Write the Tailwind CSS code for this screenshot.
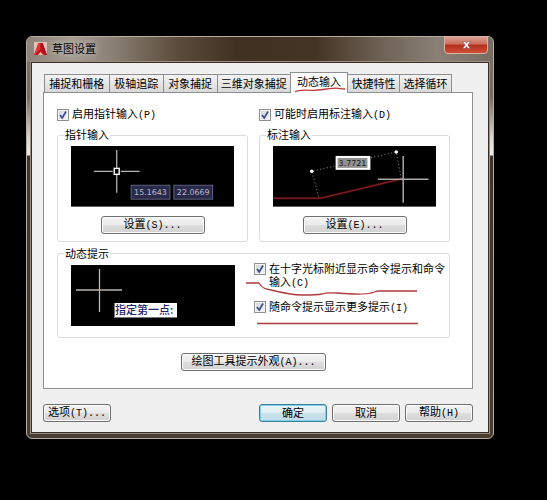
<!DOCTYPE html>
<html lang="zh-CN">
<head>
<meta charset="utf-8">
<meta name="viewport" content="width=device-width, initial-scale=1">
<title>草图设置</title>
<script src="https://cdn.jsdelivr.net/npm/@tailwindcss/browser@4"></script>
</head>
<body class="min-h-screen bg-black pt-9 pl-[26px] pr-[53px] text-[11px] leading-[12px] text-black font-['Liberation_Sans','Noto_Sans_CJK_SC',sans-serif]">
<main class="rounded-md border border-[#b9ad9f] bg-[linear-gradient(180deg,#7c7166_0,#756b61_60px,#d8d5d0_100px,#eeeeec_118px,#40352b_119px,#4a3d32_100%)] px-1 pb-[5px]">
  <header class="-mx-1 flex h-[25px] items-start justify-between rounded-t-md bg-[linear-gradient(90deg,#8d857b_0,#a39b91_10%,#857a6e_20%,#5c4c3c_32%,#413122_45%,#443424_62%,#6e6256_76%,#8a8075_88%,#776c62_100%)] pl-[7px] pr-[5px]">
    <div class="flex items-center gap-[5px] pt-[5px]">
      <svg class="size-[13px]" viewBox="0 0 13 13" aria-hidden="true"><rect width="13" height="13" fill="#e3bdb8"/><path d="M0 13 4.500 1h4l4.500 12H9.500L6.500 10 4 13z" fill="#c4161c"/><path d="M4.500 1h2L5.500 8 0 13z" fill="#dd3a37"/><path d="M6.500 1h2L13 13 8 9z" fill="#a5141a"/></svg>
      <h1 class="[text-shadow:0_0_6px_#ffffffaa]">草图设置</h1>
    </div>
    <button type="button" aria-label="关闭" class="-mt-px flex h-[18px] w-11 items-center justify-center rounded-b border border-[#d9b3a8] bg-[linear-gradient(180deg,#dca093_0,#cc6a58_45%,#b32d1b_50%,#cf4f37_100%)]">
      <svg class="h-2 w-[9px]" viewBox="0 0 9 8" aria-hidden="true"><path d="M.5.5h2.600L4.500 2.300 5.900.5h2.600L5.800 4l2.700 3.500H5.900L4.500 5.700 3.100 7.500H.5L3.200 4z" fill="#fff" stroke="#6b4540" stroke-width=".5"/></svg>
    </button>
  </header>
  <div class="border border-[#3a2e24] bg-[#f0f0f0] pt-[9px] pr-[15px] pb-[10px] pl-[11px] outline outline-[#9a8f82]">
    <div role="tablist" class="relative mr-[21px] ml-px flex items-end">
      <button role="tab" type="button" class="h-[18px] flex-[65] whitespace-nowrap border border-b-0 border-[#8c8e90] bg-linear-to-b from-[#f4f4f4] to-[#d8d8d8]">捕捉和栅格</button>
      <button role="tab" type="button" class="h-[18px] flex-[54] whitespace-nowrap border border-b-0 border-l-0 border-[#8c8e90] bg-linear-to-b from-[#f4f4f4] to-[#d8d8d8]">极轴追踪</button>
      <button role="tab" type="button" class="h-[18px] flex-[54] whitespace-nowrap border border-b-0 border-l-0 border-[#8c8e90] bg-linear-to-b from-[#f4f4f4] to-[#d8d8d8]">对象捕捉</button>
      <button role="tab" type="button" class="h-[18px] flex-[74] whitespace-nowrap border-t border-[#8c8e90] bg-linear-to-b from-[#f4f4f4] to-[#d8d8d8]">三维对象捕捉</button>
      <button role="tab" type="button" aria-selected="true" class="relative -mb-px h-[21px] flex-[57] whitespace-nowrap border border-b-0 border-[#8c8e90] bg-white pb-[3px]">动态输入
        <svg class="absolute top-[14px] left-1 h-[6px] w-[50px]" viewBox="0 0 50 6" aria-hidden="true"><path d="M0 5C4 2 10 3.500 18 3.300S30 2 38 1.300 44 2.200 50 2" fill="none" stroke="#c0393b" stroke-width="1.300"/></svg>
      </button>
      <button role="tab" type="button" class="h-[18px] flex-[52] whitespace-nowrap border border-b-0 border-l-0 border-[#8c8e90] bg-linear-to-b from-[#f4f4f4] to-[#d8d8d8]">快捷特性</button>
      <button role="tab" type="button" class="h-[18px] flex-[52] whitespace-nowrap border border-b-0 border-l-0 border-[#8c8e90] bg-linear-to-b from-[#f4f4f4] to-[#d8d8d8]">选择循环</button>
    </div>
    <section role="tabpanel" class="border border-[#8c8e90] bg-white pt-[15px] pr-[22px] pb-[17px] pl-[13px]">
      <div class="grid grid-cols-2 gap-x-[11px] gap-y-[7px]">
        <label class="flex h-[14px] items-center gap-[3px]">
          <span class="relative size-3"><input type="checkbox" checked class="peer block size-3 appearance-none border border-[#8e8f8f] bg-linear-to-br from-[#cfd4da] to-[#f4f5f6] shadow-[inset_0_0_0_1px_#f4f4f4]"><svg class="pointer-events-none absolute inset-0 hidden size-3 peer-checked:block" viewBox="0 0 12 12" aria-hidden="true"><path d="M3 6l2.200 3L9 2.500" fill="none" stroke="#3c4f86" stroke-width="1.700"/></svg></span>
          <span>启用指针输入<span class="font-['Liberation_Mono',monospace] text-[10px]">(P)</span></span>
        </label>
        <label class="flex h-[14px] items-center gap-[3px]">
          <span class="relative size-3"><input type="checkbox" checked class="peer block size-3 appearance-none border border-[#8e8f8f] bg-linear-to-br from-[#cfd4da] to-[#f4f5f6] shadow-[inset_0_0_0_1px_#f4f4f4]"><svg class="pointer-events-none absolute inset-0 hidden size-3 peer-checked:block" viewBox="0 0 12 12" aria-hidden="true"><path d="M3 6l2.200 3L9 2.500" fill="none" stroke="#3c4f86" stroke-width="1.700"/></svg></span>
          <span>可能时启用标注输入<span class="font-['Liberation_Mono',monospace] text-[10px]">(D)</span></span>
        </label>
        <fieldset class="min-w-0 rounded-[3px] border border-[#dcdcdc] px-[13px] pb-[7px]">
          <legend class="-ml-[7px] px-px">指针输入</legend>
          <div class="flex flex-col items-center gap-[9px] pt-[5px]">
            <svg class="w-full" viewBox="0 0 164 61" role="img" aria-label="指针输入预览">
              <rect width="164" height="61" fill="#000"/>
              <path d="M46 4v18M46 29v18M23 25.500h19M50 25.500h19" stroke="#b5b5b0" stroke-width="1.300"/>
              <rect x="43.500" y="22.500" width="5" height="6" fill="none" stroke="#fff" stroke-width="1.400"/>
              <g fill="#292a49" stroke="#5d5f7e"><rect x="60.500" y="39.500" width="39" height="14"/><rect x="103.500" y="39.500" width="39" height="14"/></g>
              <g fill="#b9bad0" font-family="DejaVu Sans" font-size="8" text-anchor="middle"><text x="80" y="49">15.1643</text><text x="123" y="49">22.0669</text></g>
            </svg>
            <button type="button" class="h-[18px] w-[104px] rounded-[3px] border border-[#707070] bg-[linear-gradient(180deg,#f3f3f3_0,#ebebeb_48%,#dddddd_52%,#d2d2d2_100%)] shadow-[inset_0_0_0_1px_#fafafa]">设置<span class="font-['Liberation_Mono',monospace] text-[10px]">(S)...</span></button>
          </div>
        </fieldset>
        <fieldset class="min-w-0 rounded-[3px] border border-[#dcdcdc] px-[13px] pb-[7px]">
          <legend class="-ml-[7px] px-px">标注输入</legend>
          <div class="flex flex-col items-center gap-[9px] pt-[5px]">
            <svg class="w-full" viewBox="0 0 164 61" role="img" aria-label="标注输入预览">
              <rect width="164" height="61" fill="#000"/>
              <path d="M0 52.500h48L130 33" fill="none" stroke="#3c0609" stroke-width="2.500"/>
              <path d="M0 52.500h48L130 33" fill="none" stroke="#96292f" stroke-width=".9"/>
              <path d="M46 51 39 25.500 124 6l5 27" fill="none" stroke="#a3a3a3" stroke-width=".9" stroke-dasharray="1 2.500"/>
              <circle cx="39" cy="25.500" r="1.800" fill="#fff"/><circle cx="124" cy="6" r="1.800" fill="#fff"/>
              <rect x="63" y="10" width="35" height="14" fill="#fff"/><rect x="65" y="12" width="30" height="10" fill="#929292"/>
              <text x="80" y="20" fill="#161616" font-family="DejaVu Sans" font-size="8" text-anchor="middle">3.7721</text>
              <path d="M131 10v47M105.500 33.500h51" stroke="#aaa9a5" stroke-width="1.500"/>
            </svg>
            <button type="button" class="h-[18px] w-[104px] rounded-[3px] border border-[#707070] bg-[linear-gradient(180deg,#f3f3f3_0,#ebebeb_48%,#dddddd_52%,#d2d2d2_100%)] shadow-[inset_0_0_0_1px_#fafafa]">设置<span class="font-['Liberation_Mono',monospace] text-[10px]">(E)...</span></button>
          </div>
        </fieldset>
      </div>
      <fieldset class="mt-[6px] min-w-0 rounded-[3px] border border-[#dcdcdc] pr-0 pb-[11px] pl-[13px]">
        <legend class="-ml-[7px] px-px">动态提示</legend>
        <div class="relative flex gap-[19px] pt-[3px]">
          <svg class="mt-[2px] w-[164px] shrink-0" viewBox="0 0 164 61" role="img" aria-label="动态提示预览">
            <rect width="164" height="61" fill="#000"/>
            <path d="M28.500 4v43M5 25h46" stroke="#b9b5aa" stroke-width="1.300"/>
            <rect x="43" y="38" width="63" height="15" fill="#777"/><rect x="44" y="38" width="62" height="14" fill="#fff"/>
            <text x="44" y="49" fill="#23236e" font-family="Noto Sans CJK SC" font-size="11" font-weight="500">指定第一点:</text>
          </svg>
          <div class="flex min-w-0 flex-col gap-[11px]">
            <label class="flex items-start gap-[3px] leading-[13px]">
              <span class="relative size-3 shrink-0"><input type="checkbox" checked class="peer block size-3 appearance-none border border-[#8e8f8f] bg-linear-to-br from-[#cfd4da] to-[#f4f5f6] shadow-[inset_0_0_0_1px_#f4f4f4]"><svg class="pointer-events-none absolute inset-0 hidden size-3 peer-checked:block" viewBox="0 0 12 12" aria-hidden="true"><path d="M3 6l2.200 3L9 2.500" fill="none" stroke="#3c4f86" stroke-width="1.700"/></svg></span>
              <span>在十字光标附近显示命令提示和命令输入<span class="font-['Liberation_Mono',monospace] text-[10px]">(C)</span></span>
            </label>
            <label class="flex items-start gap-[3px] leading-[13px]">
              <span class="relative size-3 shrink-0"><input type="checkbox" checked class="peer block size-3 appearance-none border border-[#8e8f8f] bg-linear-to-br from-[#cfd4da] to-[#f4f5f6] shadow-[inset_0_0_0_1px_#f4f4f4]"><svg class="pointer-events-none absolute inset-0 hidden size-3 peer-checked:block" viewBox="0 0 12 12" aria-hidden="true"><path d="M3 6l2.200 3L9 2.500" fill="none" stroke="#3c4f86" stroke-width="1.700"/></svg></span>
              <span>随命令提示显示更多提示<span class="font-['Liberation_Mono',monospace] text-[10px]">(I)</span></span>
            </label>
          </div>
          <svg class="pointer-events-none absolute top-[19px] left-[174px] h-[48px] w-[176px]" viewBox="0 0 176 48" fill="none" stroke="#b03a3c" stroke-width="1.300" aria-hidden="true"><path d="M1 4h13c3 5 6 6 12 7 12 3 21 5 31 5 8 0 15 0 20-1 5-2 9-1 15-1 12 1 27 2 34 0 4-1 5-2 7-2h39"/><path d="M12 44.500h161"/></svg>
        </div>
      </fieldset>
      <div class="mt-[15px] flex justify-center">
        <button type="button" class="h-[18px] w-[145px] whitespace-nowrap rounded-[3px] border border-[#707070] bg-[linear-gradient(180deg,#f3f3f3_0,#ebebeb_48%,#dddddd_52%,#d2d2d2_100%)] shadow-[inset_0_0_0_1px_#fafafa]">绘图工具提示外观<span class="font-['Liberation_Mono',monospace] text-[10px]">(A)...</span></button>
      </div>
    </section>
    <footer class="mt-[15px] flex gap-[5px]">
      <button type="button" class="mr-auto h-[18px] w-[68px] whitespace-nowrap rounded-[3px] border border-[#707070] bg-[linear-gradient(180deg,#f3f3f3_0,#ebebeb_48%,#dddddd_52%,#d2d2d2_100%)] shadow-[inset_0_0_0_1px_#fafafa]">选项<span class="font-['Liberation_Mono',monospace] text-[10px]">(T)...</span></button>
      <button type="button" class="h-[18px] w-[68px] rounded-[3px] border border-[#3c7f9c] bg-[linear-gradient(180deg,#eef5f8_0,#e0eef4_48%,#cbe2ec_52%,#c0dce8_100%)] shadow-[inset_0_0_0_1px_#7fd0ea]">确定</button>
      <button type="button" class="h-[18px] w-[68px] rounded-[3px] border border-[#707070] bg-[linear-gradient(180deg,#f3f3f3_0,#ebebeb_48%,#dddddd_52%,#d2d2d2_100%)] shadow-[inset_0_0_0_1px_#fafafa]">取消</button>
      <button type="button" class="h-[18px] w-[68px] rounded-[3px] border border-[#707070] bg-[linear-gradient(180deg,#f3f3f3_0,#ebebeb_48%,#dddddd_52%,#d2d2d2_100%)] shadow-[inset_0_0_0_1px_#fafafa]">帮助<span class="font-['Liberation_Mono',monospace] text-[10px]">(H)</span></button>
    </footer>
  </div>
</main>
</body>
</html>
